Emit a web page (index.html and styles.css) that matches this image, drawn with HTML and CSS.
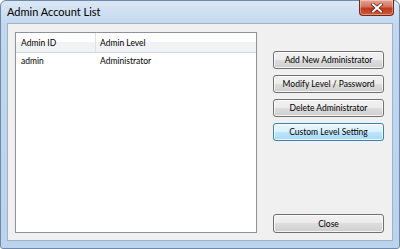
FILE: index.html
```html
<!DOCTYPE html>
<html lang="en">
<head>
  <meta charset="UTF-8">
  <title>Admin Account List</title>
  <link rel="stylesheet" href="styles.css">
</head>
<body>
  <div class="window">
    <div class="titlebar">
      <span class="title">Admin Account List</span>
      <div class="close-x">
        <svg width="14" height="10" viewBox="0 0 14 10">
          <path d="M3 1.5 L11 8.5 M11 1.5 L3 8.5" stroke="#5a1a10" stroke-width="3.4" stroke-linecap="square"/>
          <path d="M3 1.5 L11 8.5 M11 1.5 L3 8.5" stroke="#fff" stroke-width="2" stroke-linecap="square"/>
        </svg>
      </div>
    </div>

    <div class="client">
      <div class="listview">
        <div class="lv-head">
          <div class="col col-id">Admin ID</div>
          <div class="col col-level">Admin Level</div>
        </div>
        <div class="lv-row">
          <div class="col col-id">admin</div>
          <div class="col col-level">Administrator</div>
        </div>
      </div>

      <div class="actions">
        <button class="btn">Add New Administrator</button>
        <button class="btn">Modify Level / Password</button>
        <button class="btn">Delete Administrator</button>
        <button class="btn hot">Custom Level Setting</button>
        <button class="btn close">Close</button>
      </div>
    </div>
  </div>
</body>
</html>
```

FILE: styles.css
```css
body {
  margin: 0;
  background: #ffffff;
  font-family: "Lato", "Open Sans", sans-serif;
  font-size: 8.5px;
  color: #000;
}

.window {
  width: 400px;
  height: 249px;
  box-sizing: border-box;
  border: 1px solid #6f8aa8;
  border-radius: 6px 6px 3px 3px;
  background: linear-gradient(#dbe8f6, #c2d7ee 24px, #bcd3ec);
  display: flex;
  flex-direction: column;
}

.titlebar {
  height: 22px;
  display: flex;
  align-items: flex-start;
  padding-left: 6px;
  padding-right: 5px;
}

.title {
  margin-top: 4px;
  font-size: 11px;
  color: #000;
}

.close-x {
  margin-left: auto;
  margin-top: -1px;
  width: 35px;
  height: 16px;
  box-sizing: border-box;
  border: 1px solid #6d2a1f;
  border-top: none;
  border-radius: 0 0 4px 4px;
  background: linear-gradient(#e8a493, #d3735d 45%, #c0391c 55%, #d05a3a);
  box-shadow: inset 0 0 0 1px rgba(255, 255, 255, 0.35);
  display: flex;
  align-items: center;
  justify-content: center;
}

.client {
  flex: 1;
  margin: 0 6px 7px;
  border: 1px solid #9fb3ca;
  background: #f0f0f0;
  display: flex;
  gap: 16px;
  padding: 8px 8px 7px 7px;
}

.listview {
  width: 242px;
  box-sizing: border-box;
  border: 1px solid #8e939b;
  background: #fff;
}

.lv-head {
  height: 19px;
  display: flex;
  background: linear-gradient(#ffffff, #ffffff 45%, #f1f2f4 50%, #f1f2f4);
  border-bottom: 1px solid #d5d5d5;
}

.lv-head .col-id {
  border-right: 1px solid #dfe1e5;
}

.lv-row {
  height: 16px;
  display: flex;
}

.col {
  display: flex;
  align-items: center;
  padding-left: 5px;
  box-sizing: border-box;
}

.col-id {
  width: 80px;
}

.col-level {
  padding-left: 4px;
}

.actions {
  width: 111px;
  display: flex;
  flex-direction: column;
  gap: 6px;
  padding-top: 19px;
}

.btn {
  height: 18px;
  padding: 0;
  font-family: inherit;
  font-size: 8.5px;
  color: #000;
  border: 1px solid #707070;
  border-radius: 3px;
  background: linear-gradient(#f2f2f2, #ebebeb 50%, #dddddd 50%, #cfcfcf);
  box-shadow: inset 0 0 0 1px rgba(255, 255, 255, 0.75);
}

.btn.hot {
  border-color: #3c7fb1;
  background: linear-gradient(#eaf6fd, #d9f0fc 50%, #bee6fd 50%, #a7d9f5);
}

.btn.close {
  margin-top: auto;
  height: 19px;
}
```
